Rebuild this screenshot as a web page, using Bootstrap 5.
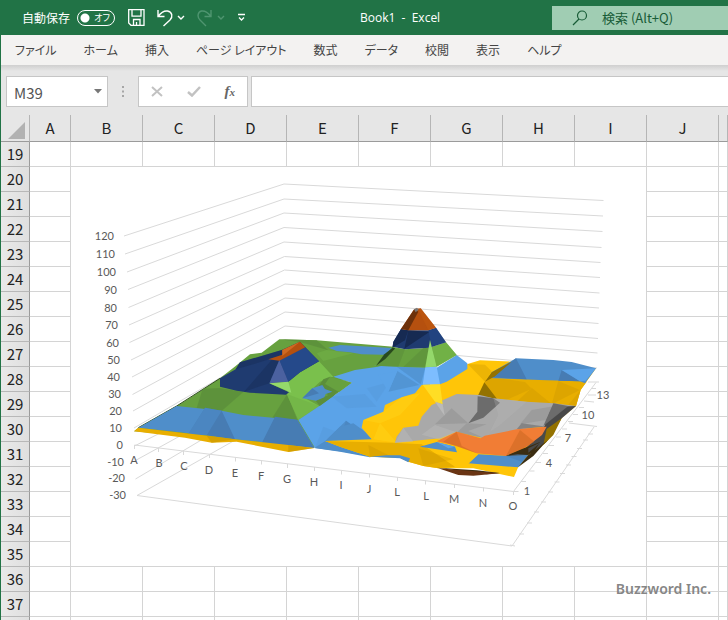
<!DOCTYPE html>
<html lang="ja">
<head>
<meta charset="utf-8">
<meta name="viewport" content="width=device-width, initial-scale=1">
<title>Book1 - Excel</title>
<link href="https://cdn.jsdelivr.net/npm/bootstrap@5.3.0/dist/css/bootstrap.min.css" rel="stylesheet">
<style>
body{font-family:"Noto Sans CJK JP","Noto Sans",sans-serif;font-size:13px;line-height:20px;background:#fff;color:#444}
.titlebar{height:35px;background:#217346;color:#fff;padding-left:22px;font-size:12px}
.titlebar svg,.fbar svg{display:block}
.plain{border:0;background:none;padding:0;color:inherit}
.autosave{gap:7px;width:93px}
.autosave label{white-space:nowrap}
.pill{width:38px;height:16px}
.pill input{appearance:none;display:block;margin:0;width:38px;height:16px;border:1px solid #fff;border-radius:8px;background:radial-gradient(circle at 7px 7px,#fff 4px,transparent 5px)}
.pill span{right:5px;top:0;font-size:9px;line-height:16px;pointer-events:none;font-feature-settings:"palt"}
.quick{margin-left:13px;gap:4px}
.docname{font-family:"Open Sans","Noto Sans",sans-serif;margin-left:114px;white-space:pre;font-size:12px}
.search{margin-left:auto;width:176px;height:24px;margin-top:1px;background:#a0cdb3;padding-left:20px;gap:14px;color:#185c37}
.search input{border:0;background:none;padding:0;width:120px;color:#185c37;font-size:13px}
.search input::placeholder{color:#185c37;opacity:1}
.ribbon{height:30px;background:#f3f2f1;padding-left:14px;border-left:1px solid #217346;gap:27px;font-size:12px;font-feature-settings:"palt"}
.ribbon a{color:#444;text-decoration:none;white-space:nowrap}
.fbar{height:50px;padding:11px 0 8px 5px;background:linear-gradient(#cfcfcf,#e6e6e6 6px);border-left:1px solid #217346}
.fbox{height:31px;background:#fff;border:1px solid #c6c6c6}
.namebox{width:102px;padding:0 5px 0 7px}
.namebox input{border:0;padding:3px 0 0;width:70px;font-size:15px;line-height:20px;color:#555;background:none}
.dots{width:30px}
.tools{width:110px;padding:0 12px}
.fx{font:italic bold 15px/20px "Liberation Serif",serif;color:#666}
.fx small{font-size:11px}
.fline{margin-left:3px;border-right:0;min-width:0}
.fline input{border:0;width:100%;background:none}
.sheet{table-layout:fixed;width:100%;border-collapse:separate;border-spacing:0;border-left:1px solid #217346;color:#222}
.sheet th,.sheet td{padding:0;border:0 solid #d4d4d4;border-width:0 1px 1px 0;height:25px;line-height:22px;overflow:hidden}
.sheet th{font-weight:400;font-size:15px;text-align:center;background:#e6e6e6}
.sheet thead th{height:27px;line-height:26px;border-bottom-color:#9b9b9b;border-right-color:#b5b5b5}
.sheet tbody th{border-right-color:#9b9b9b;border-bottom-color:#b8b8b8;background:linear-gradient(90deg,#e9e9e9,#dfdfdf)}
.corner svg{display:block;margin:4px 3px 0 auto}
.w-head{width:29px}.w-a{width:41px}.w-col{width:72px}
.sheet .plot{vertical-align:top;background:#fff}
.plot svg{display:block;width:100%;height:auto}
.wall{fill:none;stroke:#d9d9d9}
.lab{font:11px Lato,"Open Sans",sans-serif;fill:#595959}
.brand-note{right:17px;bottom:21px;font:600 14px/20px "Noto Sans","Open Sans",sans-serif;color:#868686}
.gn{fill:#67a13f}.gd{fill:#5b8e3b}.gl{fill:#7ac04c}.gx{fill:#94d86b}
.bl{fill:#4f8eca}.bd{fill:#477cb3}.bm{fill:#5ba3e8}.bx{fill:#7dbdff}
.ye{fill:#e8ae00}.yb{fill:#ffc508}.yx{fill:#ffdd25}.yd{fill:#c89600}.yo{fill:#947200}
.na{fill:#1f3b70}.nd{fill:#162a52}.nb{fill:#25498a}.nl{fill:#4b61a0}
.or{fill:#b5500f}.od{fill:#6d310b}.ol{fill:#f17d35}.om{fill:#cf6923}
.gy{fill:#a9a9a9}.gz{fill:#929292}.gk{fill:#6c6c6c}.gw{fill:#bababa}.dk{fill:#494949}.br{fill:#6a3514}.bk{fill:#3b2d12}
</style>
<script src="https://cdn.jsdelivr.net/npm/bootstrap@5.3.0/dist/js/bootstrap.bundle.min.js"></script>
</head>
<body>
<main class="position-relative vh-100 overflow-hidden">
<header class="titlebar d-flex align-items-center">
  <div class="autosave d-flex align-items-center"><label for="auto">自動保存</label>
    <span class="pill position-relative flex-shrink-0"><input id="auto" type="checkbox" role="switch"><span class="position-absolute">オフ</span></span></div>
  <div class="quick d-flex align-items-center">
    <button class="plain" aria-label="上書き保存"><svg width="17" height="17" fill="none" stroke="#fff" stroke-width="1.3"><path d="M.7.7H16v15.6H3L.7 14zM4 .7v6.5h9V.7M5.5 16v-5.500h6.500V16M8.500 16v-3"/></svg></button>
    <button class="plain ms-2" aria-label="元に戻す"><svg width="28" height="18" fill="none" stroke="#fff" stroke-width="1.400"><path d="M1 1v6.500h6.500M1 7.500C4 3.500 7 1.500 10.500 2c5 1 5.500 6 2.500 9l-6.500 6"/><path d="m21 7 3 3 3-3"/></svg></button>
    <button class="plain ms-2" aria-label="やり直し"><svg width="28" height="18" fill="none" stroke="#4f9570" stroke-width="1.400"><path d="M14 1v6.500H7.500M14 7.500C11 3.500 8 1.500 4.500 2c-4 1-4.500 6-1.500 9l6 6"/><path d="m21 7 3 3 3-3"/></svg></button>
    <button class="plain ms-2" aria-label="カスタマイズ"><svg width="9" height="9" fill="none" stroke="#fff" stroke-width="1.300"><path d="M1 1.500h7M2 4.500 4.500 7 7 4.500"/></svg></button>
  </div>
  <div class="docname">Book1  -  Excel</div>
  <div class="search d-flex align-items-center"><svg width="16" height="16" fill="none" stroke="#185c37" stroke-width="1.200"><circle cx="10" cy="5.500" r="4.500"/><path d="m7 9-6 6"/></svg><input type="text" aria-label="検索" placeholder="検索 (Alt+Q)"></div>
</header>
<nav class="ribbon d-flex align-items-center">
  <a href="#">ファイル</a><a href="#">ホーム</a><a href="#">挿入</a><a href="#">ページ レイアウト</a><a href="#">数式</a><a href="#">データ</a><a href="#">校閲</a><a href="#">表示</a><a href="#">ヘルプ</a>
</nav>
<div class="fbar d-flex">
  <div class="fbox namebox d-flex align-items-center justify-content-between"><input type="text" aria-label="名前ボックス" value="M39"><button class="plain" aria-label="名前の一覧"><svg width="8" height="5"><path d="M0 0h8L4 4.500z" fill="#777"/></svg></button></div>
  <div class="dots d-flex align-items-center justify-content-center"><svg width="2" height="11" fill="#a6a6a6"><path d="M0 0h2v2H0zM0 4.500h2v2H0zM0 9h2v2H0z"/></svg></div>
  <div class="fbox tools d-flex align-items-center justify-content-between">
    <button class="plain" aria-label="キャンセル"><svg width="12" height="11" stroke="#c2c2c2" stroke-width="2"><path d="m1 1 10 9M11 1 1 10"/></svg></button>
    <button class="plain" aria-label="入力"><svg width="14" height="11" fill="none" stroke="#c2c2c2" stroke-width="2.500"><path d="m1 6 4 3.500L13 1"/></svg></button>
    <button class="plain fx" aria-label="関数の挿入">f<small>x</small></button>
  </div>
  <div class="fbox fline flex-fill"><input type="text" aria-label="数式バー"></div>
</div>
<table class="sheet">
<colgroup><col class="w-head"><col class="w-a"><col class="w-col"><col class="w-col"><col class="w-col"><col class="w-col"><col class="w-col"><col class="w-col"><col class="w-col"><col class="w-col"><col class="w-col"><col></colgroup>
<thead><tr><th class="corner"><svg width="18" height="17"><path d="M17 0v17H0z" fill="#b2b2b2"/></svg></th><th>A</th><th>B</th><th>C</th><th>D</th><th>E</th><th>F</th><th>G</th><th>H</th><th>I</th><th>J</th><th></th></tr></thead>
<tbody>
<tr><th>19</th><td></td><td></td><td></td><td></td><td></td><td></td><td></td><td></td><td></td><td></td><td></td></tr>
<tr><th>20</th><td></td><td class="plot" colspan="8" rowspan="16">
<svg viewBox="71 167 575 399" role="img" aria-label="3-D 等高線グラフ">
<g class="wall">
<path d="M124 236 284 184 603.500 200.500M125 254 284 199 603 216M127 272 284 213 602.500 231.500M128 289.500 284 227.500 601.500 247.500M128.500 307.500 284 242 600.500 262.500M129 325 284.500 256.500 600 277.500M129.500 342.500 284.500 270 599.500 293M131 360 285 284 599 308M132 377 285 298 598.500 323.500M132.500 394.500 285 312 598 338.500M133 411 285 326 597.500 353M134 428 285 340 597 368"/>
<path d="M134.500 449V445L513.500 491.500V495M134.500 446 170 428M134.500 461 200 425M135.500 479 230 423M137 495.500 260 426M137 495.500 512 546M158.500 448v4M183.500 451v4M209.500 454v4M235.500 457.500v4M261.500 460.500v4M287.500 464v4M314.500 467v4M341.500 470.500v4M369.500 473.500v4M397.500 477v4M425.500 480.500v4M454.500 484v4M483.500 487.500v4M513.500 491.500 596 382.500M513.500 491.500h5M521 481.500h5M529.500 471h5M536 462.500h5M543 453.500h5M549 445.500h5M556 437h5M562 429h5M568 421.500h5M573 414.500h5M579 407.500h5M584 401 594 402M588 395h8M592 388.500h4M588 382h11M569 423 597 426.500M512 546 594 427M510 545l5 1M519 534h5M527 523h5M534 512h5M541 502h5M548 492h5M554.500 482h5M560 473.500h5M566 465h5M571.500 456.500h5M577 448.500h5M583 440h5M588 434h5"/>
</g>
<g transform="translate(70 160) scale(.33333)">
<path class="gn" d="M192 814 205 803 320 738 345 723 450 655 497 618 540 583 575 578 628 538 740 541 970 560 940 650 870 670 810 660 733 864 425 835z"/>
<path d="m205 803 115-65 130-83" fill="none" stroke="#314f20" stroke-width="3"/>
<path class="gd" d="m398 686 52-2 70 12-65 57-75-9zM652 702l-45 71 75 8zM628 538l112 3 35 30-85-25z" opacity=".8"/>
<path class="gl" d="m740 580 30-10 80 10-90 23z" opacity=".3"/>
<path class="bl" d="m205 803 115-65 135 14 65 13 162 15 51 84-78-9-160-17-85-12z"/>
<path class="bd" d="m355 822 50-79 50 9 40 86-85-12zM575 850l40-80 67 9 51 85-78-8z"/>
<path class="bl" d="m355 822 50-79 50 9-45 74z" opacity=".6"/>
<path class="ye" d="m192 814 13-11 215 25 75 10 160 17 78 9-78 12-155-31-75 3-80-15z"/><path class="yd" d="m655 855 78 9-78 12zM410 827l85 11-70 10z" opacity=".6"/>
<path class="gl" d="M655 665 690 637 747 604 790 650 750 665 700 712 748 738 685 780 650 702z"/>
<path class="gn" d="M650 702 748 738 685 780z" opacity=".3"/>
<path class="na" d="M450 655 497 628 510 607 635 570 690 545 747 604 690 637 655 665 598 670 657 697 648 704 540 698 500 692 450 680z"/>
<path class="nd" d="M497 628 510 607 635 570 637 585 560 610zM522 695 607 598 628 600 598 670z" opacity=".4"/>
<path class="nb" d="m628 600 77-38 42 42-57 33-35 28z"/><path class="nl" d="m628 600-30 70 57-5z"/>
<path class="or" d="m595 598 42-14v-14l53-25 16 17-78 40z"/><path class="om" d="m637 570 53-25-53 43z"/>
<path class="gx" d="m598 670 57-5 9 33z"/>
</g>
<g transform="translate(270 320) scale(.33333)">
<path class="bl" d="m175 83 35-8 170 10 20 21-125-3-35-6-40-4z"/>
<path class="bm" d="M190 170 255 150 360 135 480 120 480 345 312 362 175 363 135 384 85 300 148 258 245 188z"/>
<path class="gd" d="m160 178 20-8 65 18-96 70-12-16 37-16-12-14-15-15z"/>
<path class="gn" d="m180 170 65 18-38 28-42-24z"/>
<path class="bl" d="m97 235 30-30 30-10 8 12 22 8-20 7-4 10-25 10z"/>
<path class="bd" d="m97 235 30-30 20 15z"/><path class="bl" d="m172 358 56-56 84 58zM135 384l40-21 85 40-40-8z"/>
<path class="bd" d="m228 302-10 30 60 8z" opacity=".35"/>
<path class="bl" d="M185 230 285 222 320 260 230 265zM290 205 360 185 320 245zM135 384 160 320 200 335z" opacity=".2"/>
</g>
<g transform="translate(340 160) scale(.33333)">
<path class="bl" d="M-45 843 0 800 40 790 110 840 0 862zM-77 864-45 843 110 885 90 892 0 875z"/>
<path class="yb" d="M383 612 420 601 515 605 768 625 722 690 708 738 665 775 620 845 535 920 522 951 400 925 295 925 250 918 205 905 180 893 90 890 0 860-45 843 95 838 65 803 70 780 130 755 135 735 185 712 225 700 245 675 300 672z"/>
<path class="ye" d="M433 667 457 635 530 640 740 665 722 690 708 738 640 735 560 725 460 715zM0 860-45 843 155 848 245 853 345 920 295 925 250 918 205 905 180 893 90 890z"/>
<path class="yd" d="m383 612 52 2 20 20-20 31zM433 667l22-15 100 14 20 20-95 42zM575 683l-43 41 103 8zM655 663l-20 70 85-43zM722 690l-40 48 26 0zM90 890l-5-35 70 35zM235 865l15 53 90-20z" opacity=".35"/>
<path class="yx" d="M70 780 130 755 185 712 240 700 180 765 120 790zM100 838 120 790 170 848z" opacity=".3"/>
<path class="yo" d="m433 667-20 42 47 6 20 13z"/>
<path class="bl" d="m455 637 73-42 112 5 55 6 73 19-33 45-15-6-120-4-150-6z"/>
<path class="bd" d="m528 595-78 57 110 6zM665 630l-10 32 65 2z"/><path class="bm" d="m665 630 103-5-31 37-17 2z"/>
<path class="yo" d="m455 637 60-32-50 44-30 16z"/>
<path class="gy" d="m350 702 70 3 40 10 100 10 80 5 68 8-43 37-45 25-45 3-125 25-20 7-80-20-50 20-135 13 5-18 20-27 45-6 10-27 30-35z"/>
<path class="gz" d="m335 745-50 48 100-3zM380 790l-30 28 80 15-45-20 55-20zM575 750l-35 43 90-15 15-40z" opacity=".55"/>
<path class="gk" d="m413 709 47 6 20 13-50 45-45 17 27-35z"/><path class="gk" d="m545 790-15 18 90-8z" opacity=".6"/>
<path class="gw" d="m190 803 30 42-55 3zM285 795l65 22-50 22-55-15z" opacity=".5"/><path class="gw" d="m460 715 100 10-80 70-30 20 25-50z" opacity=".25"/>
<path class="dk" d="m630 755 15-15 63-2-43 37-45 70-55 40-67 3 60-25 50-50z"/><path class="gk" d="m640 730 45 8-75 60z"/>
<path class="ol" d="m290 844 60-29 72 20 12-8 96-19 90-8-14 25-46 35-62 28-88-8-58-22z"/>
<path class="om" d="m350 815-40 30 100 35-45-22zM540 810l-42 78 40-15 45-28z" opacity=".6"/>
<path class="yo" d="m665 775 43-37-43 37-25 50-30 30 10-48z"/><path class="bk" d="m498 888 50-22 52-20-18 30-22 10z"/>
<path class="dk" d="m565 865 40-20-40 33z"/>
<path class="bl" d="m240 860 50-14 55 14 6 17zM415 883l85 5 65-3-30 37-150-12z"/><path class="bm" d="m290 846 55 14-20 5z"/><path class="bd" d="m498 888 35-6 32 3-20 20z" opacity=".5"/>
<path class="yb" d="m350 863 65 20-30 28z"/><path class="bl" d="M90 890 140 886 180 886 210 895 205 907 180 895z"/>
<path class="bk" d="m535 921 30-36 55-42-40 45zM290 923l120 8 70 8-40 4z"/><path class="br" d="m295 925 185 15-80 7-45-2z"/>
</g>
<g transform="translate(360 295) scale(.33333)">
<path class="bm" d="m48 212 67 3 115 3 60-38 32 25v17l-62 38-20 8h-60l-70-42-70-16z"/>
<path class="bl" d="m112 228-27 62 93-20zM110 215l72 53 14-50z" opacity=".65"/><path class="bm" d="m112 228-27 62-30-50z"/>
<path class="gn" d="m98 155 37 8 73-5 50-16 32 38-60 35-33 3-82-3-67-3z"/><path class="gd" d="m135 163-20 52-67-3 50-50zM210 140l-80 75h65z" opacity=".55"/>
<path d="m98 158-25 20-25 34 28-20 30-32z" fill="#294a1d"/><path class="gl" d="m258 142 32 38-60 35-14-60z" opacity=".55"/>
<path class="na" d="m123 102 22 4h60l23-8 30 44-50 16-73 5-37-8 2-15z"/><path class="nd" d="m123 102 22 4-10 30-38 22 3-17zM145 106l-12 55 75-50z"/><path class="nb" d="m205 106 23-8 30 44-43 12z" opacity=".6"/>
<path class="or" d="m163 42 19-2 46 58-23 8h-60l-22-4z"/><path class="od" d="m163 42 12 8-30 56-22-4z"/><path d="m182 40 46 58-23 8-28-58z" fill="#c0580f" opacity=".6"/><path d="m162 43 9-5 5 6-9 8z" fill="#777"/>
<path class="gx" d="m210 135-14 82 34-2z"/><path class="bx" d="m196 217 34-2 10 53-52 1z"/><path class="yx" d="m188 269 52-1 8 60-23-8z"/><path class="gw" d="m225 320 23 8 6 34z"/>
</g>
<g class="lab" text-anchor="end">
<text x="114" y="240">120</text><text x="115" y="258">110</text><text x="116" y="276">100</text><text x="117" y="294">90</text><text x="117" y="312">80</text><text x="118" y="329">70</text><text x="119" y="347">60</text><text x="120" y="364">50</text><text x="120" y="381">40</text><text x="121" y="398">30</text><text x="122" y="415">20</text><text x="122" y="432">10</text><text x="123" y="449">0</text><text x="124" y="466">-10</text><text x="125" y="482">-20</text><text x="126" y="499">-30</text>
</g>
<g class="lab" text-anchor="middle">
<text x="134" y="464">A</text><text x="159" y="467">B</text><text x="184" y="470">C</text><text x="209" y="474">D</text><text x="235" y="477">E</text><text x="261" y="480">F</text><text x="287" y="483">G</text><text x="314" y="486">H</text><text x="341" y="489">I</text><text x="369" y="493">J</text><text x="397" y="496">L</text><text x="426" y="500">L</text><text x="454" y="503">M</text><text x="483" y="507">N</text><text x="513" y="510">O</text>
<text x="527" y="495">1</text><text x="549" y="467">4</text><text x="568" y="442">7</text><text x="588" y="419">10</text><text x="603" y="399">13</text>
</g>
</svg></td><td></td><td></td></tr>
<tr><th>21</th><td></td><td></td><td></td></tr>
<tr><th>22</th><td></td><td></td><td></td></tr>
<tr><th>23</th><td></td><td></td><td></td></tr>
<tr><th>24</th><td></td><td></td><td></td></tr>
<tr><th>25</th><td></td><td></td><td></td></tr>
<tr><th>26</th><td></td><td></td><td></td></tr>
<tr><th>27</th><td></td><td></td><td></td></tr>
<tr><th>28</th><td></td><td></td><td></td></tr>
<tr><th>29</th><td></td><td></td><td></td></tr>
<tr><th>30</th><td></td><td></td><td></td></tr>
<tr><th>31</th><td></td><td></td><td></td></tr>
<tr><th>32</th><td></td><td></td><td></td></tr>
<tr><th>33</th><td></td><td></td><td></td></tr>
<tr><th>34</th><td></td><td></td><td></td></tr>
<tr><th>35</th><td></td><td></td><td></td></tr>
<tr><th>36</th><td></td><td></td><td></td><td></td><td></td><td></td><td></td><td></td><td></td><td></td><td></td></tr>
<tr><th>37</th><td></td><td></td><td></td><td></td><td></td><td></td><td></td><td></td><td></td><td></td><td></td></tr>
<tr><th></th><td></td><td></td><td></td><td></td><td></td><td></td><td></td><td></td><td></td><td></td><td></td></tr>
</tbody></table>
<div class="brand-note position-absolute">Buzzword Inc.</div>
</main>
</body>
</html>
